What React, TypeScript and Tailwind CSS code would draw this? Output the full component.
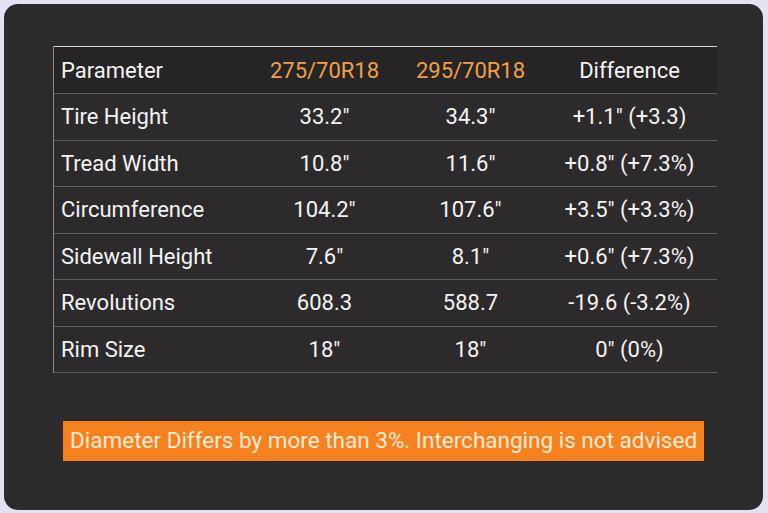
import React from 'react';

const rows: [string, string, string, string][] = [
  ['Tire Height', '33.2"', '34.3"', '+1.1" (+3.3)'],
  ['Tread Width', '10.8"', '11.6"', '+0.8" (+7.3%)'],
  ['Circumference', '104.2"', '107.6"', '+3.5" (+3.3%)'],
  ['Sidewall Height', '7.6"', '8.1"', '+0.6" (+7.3%)'],
  ['Revolutions', '608.3', '588.7', '-19.6 (-3.2%)'],
  ['Rim Size', '18"', '18"', '0" (0%)'],
];

const App: React.FC = () => {
  return (
    <div className="w-[768px] h-[513px] bg-[#e4e2f0] p-[4px] font-['Roboto',sans-serif]">
      <div className="w-[759px] h-[506px] bg-[#2c2a2b] rounded-[14px] pt-[42px] pl-[49px]">
        <table className="w-[663px] border-collapse table-fixed text-[22px] text-[#f4f4f4] border-b border-[#5e5c5d]">
          <colgroup>
            <col className="w-[197px]" />
            <col className="w-[148px]" />
            <col className="w-[144px]" />
            <col className="w-[174px]" />
          </colgroup>
          <thead>
            <tr className="h-[47px] bg-[#262425] border-t border-[#d8d8d8]">
              <th className="font-normal text-left pl-[7px] border-l border-[#8a8a8a]">Parameter</th>
              <th className="font-normal text-[#f0a048]">275/70R18</th>
              <th className="font-normal text-[#f0a048]">295/70R18</th>
              <th className="font-normal">Difference</th>
            </tr>
          </thead>
          <tbody>
            {rows.map((r) => (
              <tr key={r[0]} className="h-[46.5px] border-t border-[#5e5c5d]">
                <td className="text-left pl-[7px] border-l border-[#8a8a8a]">{r[0]}</td>
                <td className="text-center">{r[1]}</td>
                <td className="text-center">{r[2]}</td>
                <td className="text-center">{r[3]}</td>
              </tr>
            ))}
          </tbody>
        </table>
        <div className="mt-[48px] ml-[10px] w-[641px] h-[40px] bg-[#f5821f] text-[#fdebd6] text-[22.5px] flex items-center pl-[7px] whitespace-nowrap">
          Diameter Differs by more than 3%. Interchanging is not advised
        </div>
      </div>
    </div>
  );
};

export default App;
